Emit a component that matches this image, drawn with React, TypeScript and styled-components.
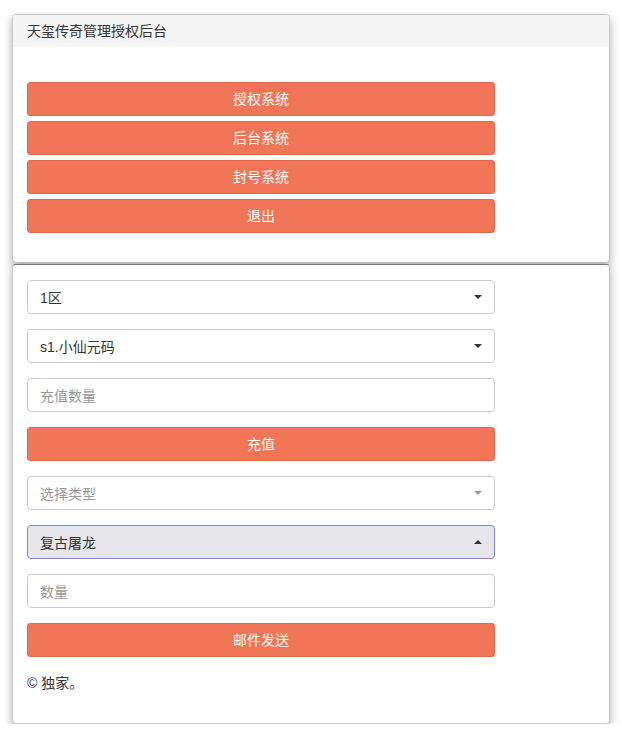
import React from "react";
import styled, { createGlobalStyle } from "styled-components";

const Global = createGlobalStyle`
  html, body { margin: 0; padding: 0; background: #fff; }
  body {
    font-family: "Liberation Sans", Arial, "Noto Sans CJK SC", sans-serif;
    font-size: 14px;
    color: #333;
  }
`;

const Page = styled.div`
  padding: 14px 12px 0 12px;
  display: flex;
  flex-direction: column;
  gap: 1px;
`;

const Card = styled.section<{ $dark?: boolean }>`
  background: #fff;
  border: 1px solid #c8c8c8;
  border-top-color: ${(p) => (p.$dark ? "#777" : "#c8c8c8")};
  border-radius: 4px;
  box-shadow: 0 4px 10px rgba(0, 0, 0, 0.32);
  overflow: hidden;
`;

const CardHeader = styled.header`
  background: #f5f5f5;
  height: 32px;
  line-height: 32px;
  padding: 0 14px;
  color: #333;
`;

const CardBody = styled.div<{ $top: number; $bottom: number }>`
  padding: ${(p) => p.$top}px 14px ${(p) => p.$bottom}px 14px;
  display: flex;
  flex-direction: column;
`;

const Stack = styled.div<{ $gap: number }>`
  display: flex;
  flex-direction: column;
  gap: ${(p) => p.$gap}px;
  width: 468px;
`;

const Button = styled.button`
  height: 34px;
  width: 100%;
  border: 1px solid #e2694c;
  border-radius: 3px;
  background: #f17658;
  color: #fff;
  font: inherit;
  font-size: 14px;
  padding: 0 0 2px 0;
`;

const Field = styled.div<{ $focused?: boolean }>`
  height: 34px;
  box-sizing: border-box;
  border: 1px solid ${(p) => (p.$focused ? "#7d88dc" : "#ccc")};
  border-radius: 4px;
  background: ${(p) => (p.$focused ? "#e7e7eb" : "#fff")};
  display: flex;
  align-items: center;
  justify-content: space-between;
  padding: 0 12px;
`;

const FieldText = styled.span<{ $placeholder?: boolean }>`
  color: ${(p) => (p.$placeholder ? "#999" : "#333")};
`;

const Caret = styled.span<{ $up?: boolean; $muted?: boolean }>`
  width: 0;
  height: 0;
  border-left: 4px solid transparent;
  border-right: 4px solid transparent;
  ${(p) =>
    p.$up
      ? `border-bottom: 4px solid ${p.$muted ? "#999" : "#333"};`
      : `border-top: 4px solid ${p.$muted ? "#999" : "#333"};`}
`;

const Footer = styled.p`
  margin: 16px 0 0 0;
  line-height: 20px;
  color: #333;
`;

export default function App() {
  return (
    <>
      <Global />
      <Page>
        <Card>
          <CardHeader>天玺传奇管理授权后台</CardHeader>
          <CardBody $top={35} $bottom={29}>
            <Stack $gap={5}>
              <Button>授权系统</Button>
              <Button>后台系统</Button>
              <Button>封号系统</Button>
              <Button>退出</Button>
            </Stack>
          </CardBody>
        </Card>
        <Card $dark>
          <CardBody $top={15} $bottom={30}>
            <Stack $gap={15}>
              <Field>
                <FieldText>1区</FieldText>
                <Caret />
              </Field>
              <Field>
                <FieldText>s1.小仙元码</FieldText>
                <Caret />
              </Field>
              <Field>
                <FieldText $placeholder>充值数量</FieldText>
              </Field>
              <Button>充值</Button>
              <Field>
                <FieldText $placeholder>选择类型</FieldText>
                <Caret $muted />
              </Field>
              <Field $focused>
                <FieldText>复古屠龙</FieldText>
                <Caret $up />
              </Field>
              <Field>
                <FieldText $placeholder>数量</FieldText>
              </Field>
              <Button>邮件发送</Button>
            </Stack>
            <Footer>© 独家。</Footer>
          </CardBody>
        </Card>
      </Page>
    </>
  );
}
